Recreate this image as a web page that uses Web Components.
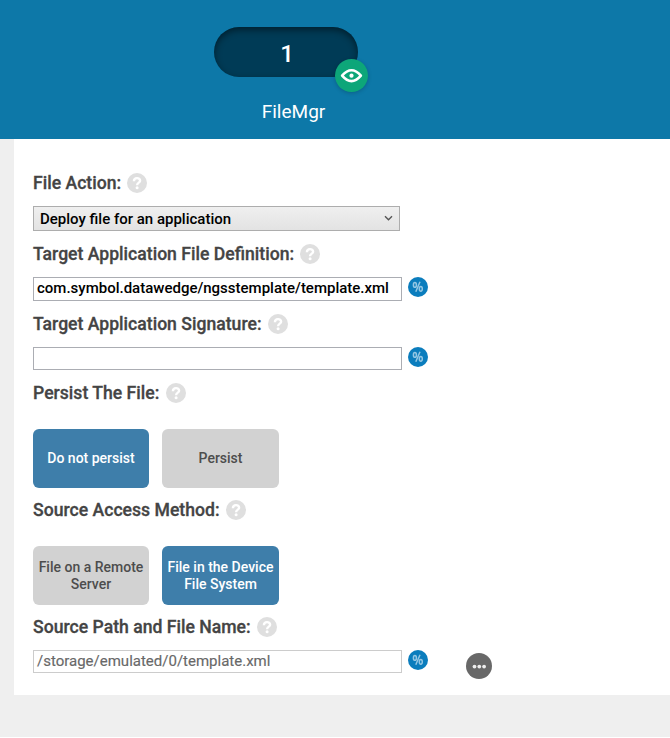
<!DOCTYPE html>
<html lang="en"><head><meta charset="utf-8"><title>FileMgr</title>
<style>body{margin:0;background:#fff;font-family:Roboto,"Liberation Sans",sans-serif}</style></head>
<body><file-manager></file-manager>
<script>
const define=(name,html)=>customElements.define(name,class extends HTMLElement{
  constructor(){super();const t=document.createElement('template');t.innerHTML=html;
    this.attachShadow({mode:'open'}).append(t.content.cloneNode(true));}
});
define('help-icon',`<style>:host{display:block;width:20px;height:20px}svg{display:block}</style>
<svg width="20" height="20" viewBox="0 0 20 20"><circle cx="10" cy="10" r="10" fill="#dfdfdf"/><path d="M6.9 8.2C6.9 4.2 13.1 4.2 13.1 7.7C13.1 9.7 10.1 9.6 10.1 12.2" fill="none" stroke="#fff" stroke-width="2.4"/><circle cx="10.1" cy="14.8" r="1.5" fill="#fff"/></svg>`);
define('percent-icon',`<style>:host{display:block;width:20px;height:20px}svg{display:block}</style>
<svg width="20" height="20" viewBox="0 0 20 20"><circle cx="10" cy="10" r="10" fill="#0b7dbd"/><g fill="none" stroke="#93c6e3" stroke-width="1.5"><ellipse cx="6.9" cy="7.9" rx="1.5" ry="2.4"/><ellipse cx="12.8" cy="11.8" rx="1.5" ry="2.4"/><path d="M12 4.8L7.8 14.8"/></g></svg>`);
define('more-button',`<style>:host{display:block;width:26px;height:26px}svg{display:block}</style>
<svg width="26" height="26" viewBox="0 0 26 26"><circle cx="13" cy="13" r="13" fill="#686868"/><g fill="#eee"><circle cx="8.5" cy="13.6" r="1.9"/><circle cx="13.3" cy="13.6" r="1.9"/><circle cx="18.1" cy="13.6" r="1.9"/></g></svg>`);
define('view-badge',`<style>:host{display:block;width:33px;height:33px;border-radius:50%;background:#0da679;box-shadow:0 1px 4px #0003}svg{display:block}</style>
<svg width="33" height="33" viewBox="0 0 33 33"><path d="M7.1 16.7Q16.5 5.9 25.9 16.7Q16.5 27.5 7.1 16.7Z" fill="none" stroke="#fff" stroke-width="2.6" stroke-linejoin="round"/><circle cx="16.5" cy="16.7" r="2.1" fill="#fff"/></svg>`);
define('step-header',`<style>:host{display:flex;flex-direction:column;align-items:center;box-sizing:border-box;height:139px;width:587px;padding-top:27px;padding-right:15px;color:#fff}
.pill{position:relative;width:144px;height:50px;border-radius:25px;background:#003b56;box-shadow:inset 0 3px 7px #0007;display:flex;align-items:center;justify-content:center;font-size:24px;font-weight:500;line-height:28px}
.num{padding:4px 0 0 2px}view-badge{position:absolute;left:121px;top:32px}.name{font-size:19px;line-height:24px;margin-top:23px;padding-left:15px}</style>
<div class="pill"><span class="num"><slot name="number"></slot></span><view-badge></view-badge></div><div class="name"><slot></slot></div>`);
define('field-label',`<style>:host{display:flex;align-items:center;gap:6.3px;height:20px;font-size:17.63px;font-weight:500;line-height:20px;color:#444;white-space:nowrap;-webkit-text-stroke:.3px}</style><span><slot></slot></span><help-icon></help-icon>`);
define('select-box',`<style>:host{display:flex;align-items:center;justify-content:space-between;box-sizing:border-box;width:367px;height:25px;border:1px solid #adadad;background:linear-gradient(#efefef,#e3e3e3);padding:0 6px;font-size:15px;font-weight:500;color:#000}</style><span><slot></slot></span><svg width="9" height="7" viewBox="0 0 9 7"><path d="M1 1.2L4.5 4.7L8 1.2" fill="none" stroke="#555" stroke-width="1.4"/></svg>`);
define('text-field',`<style>:host{display:flex;gap:6px;height:24px;font-size:15px;font-weight:500;line-height:20px;color:#000}
.box{box-sizing:border-box;width:369px;height:24px;border:1px solid #abadb3;padding:0 3px;white-space:nowrap}
:host([muted]){font-weight:400;color:#686868;-webkit-text-stroke:.15px}:host([muted]) .box{border-color:#ccc;height:23px}:host([short]) .box{height:23px}percent-icon{margin-top:.4px}</style>
<div class="box"><slot></slot></div><percent-icon></percent-icon><slot name="extra"></slot>`);
define('choice-button',`<style>:host{display:flex;align-items:center;justify-content:center;text-align:center;box-sizing:border-box;height:58.4px;margin-top:.3px;padding-top:.8px;border-radius:6px;background:#d2d2d2;color:#4d4d4d;font-size:14px;font-weight:500;line-height:17px;white-space:nowrap}:host([selected]){background:#3e7eaa;color:#fff}</style><span><slot></slot></span>`);
define('choice-group',`<style>:host{display:grid;grid-template-columns:116px 117px;gap:13px}</style><slot></slot>`);
define('file-manager',`<style>:host{display:block;width:670px;height:738px;background:#fff}
header{background:#0d78a8}main{box-sizing:border-box;height:598px;background:#efefef;padding-left:14px}
section{box-sizing:border-box;height:556px;background:#fff;padding:34px 0 0 19px;display:grid;align-content:start;grid-template-rows:33px 38px 33px 37px 33px 36px 46px 71px 46px 71px 33px 24px}
more-button{margin:3px 0 0 32px}</style>
<header><step-header><span slot="number">1</span>FileMgr</step-header></header>
<main><section>
<field-label>File Action:</field-label><select-box>Deploy file for an application</select-box>
<field-label>Target Application File Definition:</field-label><text-field>com.symbol.datawedge/ngsstemplate/template.xml</text-field>
<field-label>Target Application Signature:</field-label><text-field short></text-field>
<field-label>Persist The File:</field-label><choice-group><choice-button selected>Do not persist</choice-button><choice-button>Persist</choice-button></choice-group>
<field-label>Source Access Method:</field-label><choice-group><choice-button>File on a Remote<br>Server</choice-button><choice-button selected>File in the Device<br>File System</choice-button></choice-group>
<field-label>Source Path and File Name:</field-label><text-field muted>/storage/emulated/0/template.xml<more-button slot="extra"></more-button></text-field>
</section></main>`);
</script></body></html>
